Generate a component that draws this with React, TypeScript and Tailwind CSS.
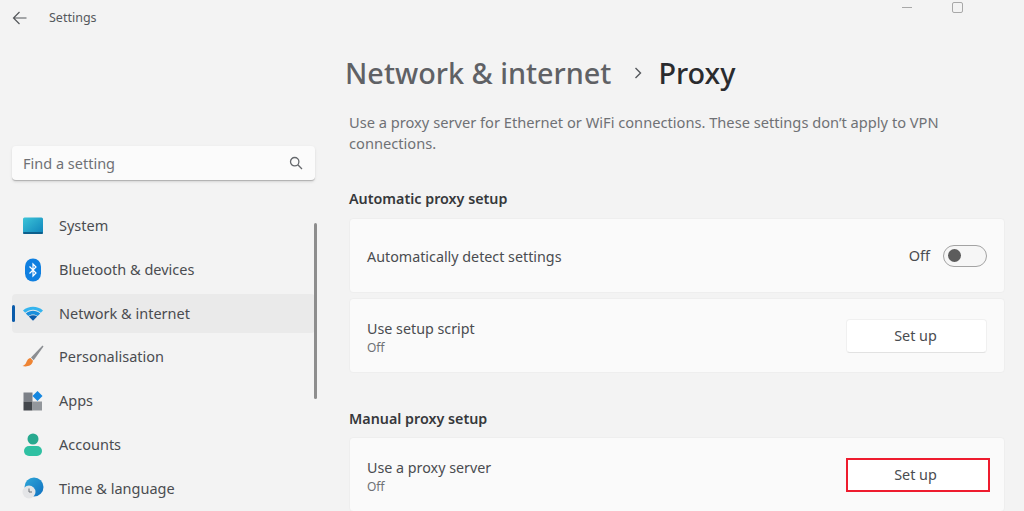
import { ReactNode } from "react";

const SystemIcon = () => (
  <svg width="22" height="18" viewBox="0 0 22 18">
    <defs>
      <linearGradient id="sys" x1="0" y1="0" x2="1" y2="1">
        <stop offset="0" stopColor="#3cc4d8" />
        <stop offset="1" stopColor="#0f84bb" />
      </linearGradient>
    </defs>
    <rect x="1" y="0.500" width="20" height="16" rx="1.500" fill="url(#sys)" />
    <rect x="1" y="15" width="20" height="2" rx="1" fill="#0c5f8c" />
  </svg>
);

const BluetoothIcon = () => (
  <svg width="18" height="24" viewBox="0 0 18 24">
    <rect x="1" y="0.500" width="16" height="23" rx="8" fill="#0f7fe0" />
    <path d="M5.500 8.500 12 15l-3 3V6l3 3-6.500 6.500" fill="none" stroke="#fff" strokeWidth="1.200" />
  </svg>
);

const WifiIcon = () => (
  <svg width="22" height="16" viewBox="0 0 22 16">
    <path d="M1 5.500C6.500.5 15.500.5 21 5.500l-2.200 2.300C14 3.600 8 3.600 3.200 7.800z" fill="#35b4ee" />
    <path d="M3.800 8.500c4.200-3.600 10.200-3.600 14.400 0l-2.500 2.600c-2.800-2.200-6.600-2.200-9.400 0z" fill="#1a8fdc" />
    <path d="M6.800 11.600c2.500-1.800 5.900-1.800 8.400 0L11 15.800z" fill="#0b5cab" />
  </svg>
);

const BrushIcon = () => (
  <svg width="22" height="24" viewBox="0 0 22 24">
    <path d="M20.500 0.500 9 12.500l2.700 2.700L21.500 1.500z" fill="#8b8e92" />
    <path d="M8.500 13c-3 .5-3.500 3-4.500 5-.6 1.300-2 2.400-3.500 3 3.500 1 9.500.5 10.500-5.200z" fill="#ee8434" />
  </svg>
);

const AppsIcon = () => (
  <svg width="20" height="20" viewBox="0 0 20 20">
    <rect x="0.500" y="1.500" width="9" height="9" fill="#7c8087" />
    <rect x="0.500" y="10.500" width="9" height="9" fill="#43474c" />
    <rect x="9.500" y="10.500" width="9.500" height="9" fill="#93979c" />
    <path d="M14.500 0 19.500 5l-5 5-5-5z" fill="#1587e0" />
  </svg>
);

const AccountsIcon = () => (
  <svg width="20" height="23" viewBox="0 0 20 23">
    <circle cx="10" cy="6" r="5.500" fill="#27a98f" />
    <rect x="1" y="13" width="18" height="10" rx="5" fill="#2fc0a2" />
  </svg>
);

const TimeIcon = () => (
  <svg width="22" height="22" viewBox="0 0 22 22">
    <defs>
      <linearGradient id="globe" x1="0" y1="0" x2="1" y2="1">
        <stop offset="0" stopColor="#2fa8d8" />
        <stop offset="1" stopColor="#0f6fc0" />
      </linearGradient>
    </defs>
    <circle cx="12" cy="10" r="9.500" fill="url(#globe)" />
    <circle cx="7" cy="15" r="6.500" fill="#e4e5e7" />
    <path d="M7 11.500V15h3" fill="none" stroke="#6b6f74" strokeWidth="1" />
  </svg>
);

const navItems: { label: string; icon: ReactNode; active?: boolean }[] = [
  { label: "System", icon: <SystemIcon /> },
  { label: "Bluetooth & devices", icon: <BluetoothIcon /> },
  { label: "Network & internet", icon: <WifiIcon />, active: true },
  { label: "Personalisation", icon: <BrushIcon /> },
  { label: "Apps", icon: <AppsIcon /> },
  { label: "Accounts", icon: <AccountsIcon /> },
  { label: "Time & language", icon: <TimeIcon /> },
];

const Sidebar = () => {
  return (
    <aside className="w-[349px] shrink-0 pl-3 pr-[34px]">
      <div className="flex h-[36px] items-center gap-[22px]">
        <svg width="15" height="14" viewBox="0 0 15 14" fill="none" stroke="#55585c" strokeWidth="1.200">
          <path d="M14.500 7H1.500M7.500 1 1.500 7l6 6" />
        </svg>
        <span className="text-[12.500px] text-[#55585c]">Settings</span>
      </div>
      <div className="mt-[110px] flex h-[35px] items-center justify-between rounded border-b border-[#b4b4b4] bg-[#fbfbfb] pl-[11px] pr-3 shadow-sm">
        <span className="pt-px text-[14.500px] text-[#6f7175]">Find a setting</span>
        <svg width="14" height="14" viewBox="0 0 14 14" fill="none" stroke="#65686c" strokeWidth="1.300">
          <circle cx="5.700" cy="5.700" r="4.200" />
          <path d="m8.800 8.800 4.200 4.200" />
        </svg>
      </div>
      <nav className="relative mt-[23px] flex flex-col">
        {navItems.map((item) => (
          <div
            key={item.label}
            className={`relative flex h-[43.750px] items-center ${item.active ? "before:absolute before:inset-x-0 before:top-[2px] before:h-[39px] before:rounded before:bg-[#eaeaea]" : ""}`}
          >
            {item.active && <span className="absolute left-0 top-[13px] z-10 h-[17px] w-[3px] rounded-full bg-[#0b5cab]" />}
            <span className="relative flex w-[47px] justify-center pr-[5px]">{item.icon}</span>
            <span className="relative text-[14.500px] text-[#4a4c50]">{item.label}</span>
          </div>
        ))}
        <span className="absolute right-[-2px] top-[19px] h-[176px] w-[3px] rounded-full bg-[#8d8d8d]" />
      </nav>
    </aside>
  );
};

const SetUpButton = ({ outlined }: { outlined?: boolean }) => (
  <button
    className={`h-[34px] text-[14.400px] text-[#4a4c50] ${
      outlined
        ? "mr-[-3px] w-[144px] border-2 border-[#ee1c2e] bg-white pr-[5px]"
        : "w-[141px] rounded border border-[#f0f0f0] border-b-[#e2e2e2] bg-white pr-[2px]"
    }`}
  >
    Set up
  </button>
);

const SettingCard = ({ title, sub, children }: { title: string; sub?: string; children: ReactNode }) => (
  <div className="flex h-[75px] items-center justify-between rounded border border-[#eeeeee] bg-[#fafafa] pl-[17px] pr-[17px]">
    <div className={`flex flex-col ${sub ? "pt-1" : "pt-0.5"}`}>
      <span className="text-[14.300px] leading-[19px] text-[#4a4c50]">{title}</span>
      {sub && <span className="mt-0.5 text-[12px] leading-[16px] text-[#6f7175]">{sub}</span>}
    </div>
    {children}
  </div>
);

export default function App() {
  return (
    <div className="relative flex h-[511px] w-[1024px] overflow-hidden bg-[#f3f3f3] font-['Noto_Sans',sans-serif]">
      <Sidebar />
      <main className="w-[656px]">
        <h1 className="ml-[-4px] mt-[52px] flex h-[42px] items-center text-[28.800px] font-medium text-[#5f6165]">
          Network &amp; internet
          <svg className="ml-[23px] mr-[15px]" width="9" height="12" viewBox="0 0 9 12" fill="none" stroke="#55585c" strokeWidth="1.400">
            <path d="m1.500 1 5 5-5 5" />
          </svg>
          <span className="text-[#2a2b2e]">Proxy</span>
        </h1>
        <p className="mt-[18px] w-[640px] text-[14.650px] leading-[21px] text-[#6f7175]">
          Use a proxy server for Ethernet or WiFi connections. These settings don’t apply to VPN connections.
        </p>
        <h2 className="mt-[35px] h-[20px] text-[14.300px] font-semibold leading-[20px] text-[#36383b]">Automatic proxy setup</h2>
        <div className="mt-[9px] flex flex-col gap-[5px]">
          <SettingCard title="Automatically detect settings">
            <div className="flex items-center gap-[13px]">
              <span className="text-[14.500px] text-[#4a4c50]">Off</span>
              <span className="flex h-[22px] w-[44px] items-center rounded-full border border-[#a3a3a3] bg-[#f6f6f6] pl-1">
                <span className="h-[13px] w-[13px] rounded-full bg-[#5c5c5c]" />
              </span>
            </div>
          </SettingCard>
          <SettingCard title="Use setup script" sub="Off">
            <SetUpButton />
          </SettingCard>
        </div>
        <h2 className="mt-[36px] h-[20px] text-[14.300px] font-semibold leading-[20px] text-[#36383b]">Manual proxy setup</h2>
        <div className="mt-[8px]">
          <SettingCard title="Use a proxy server" sub="Off">
            <SetUpButton outlined />
          </SettingCard>
        </div>
      </main>
      <span className="absolute left-[902px] top-[7px] h-px w-[10px] bg-[#a8a8a8]" />
      <span className="absolute left-[952px] top-[2px] h-[11px] w-[11px] rounded-[2px] border border-[#a8a8a8]" />
    </div>
  );
}
